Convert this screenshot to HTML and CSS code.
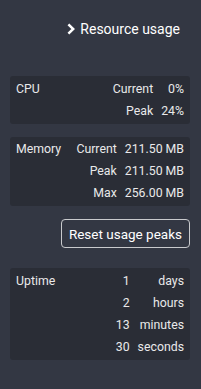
FILE: index.html
```html
<!DOCTYPE html>
<html lang="en">
  <head>
    <meta charset="UTF-8" />
    <meta name="viewport" content="width=device-width, initial-scale=1.0" />
    <title>Resource usage</title>
    <link rel="stylesheet" href="styles.css">
  </head>
  <body>
    <main class="panel">
      <header class="panel-header">
        <h2>
          <svg class="chevron" width="10" height="12" viewBox="0 0 10 12">
            <path d="M2.4 1.3 L7.2 6 L2.4 10.7" fill="none" stroke="#fff" stroke-width="2.5" />
          </svg>
          Resource usage
        </h2>
      </header>

      <section class="usage-card">
        <span class="label">CPU</span>
        <span class="key">Current</span>
        <span class="value">0%</span>
        <span></span>
        <span class="key">Peak</span>
        <span class="value">24%</span>
      </section>

      <section class="usage-card">
        <span class="label">Memory</span>
        <span class="key">Current</span>
        <span class="value">211.50 MB</span>
        <span></span>
        <span class="key">Peak</span>
        <span class="value">211.50 MB</span>
        <span></span>
        <span class="key">Max</span>
        <span class="value">256.00 MB</span>
      </section>

      <div class="actions">
        <button type="button" id="reset-peaks">Reset usage peaks</button>
      </div>

      <section class="usage-card uptime">
        <span class="label">Uptime</span>
        <span class="key">1</span>
        <span class="value">days</span>
        <span></span>
        <span class="key">2</span>
        <span class="value">hours</span>
        <span></span>
        <span class="key">13</span>
        <span class="value">minutes</span>
        <span></span>
        <span class="key">30</span>
        <span class="value">seconds</span>
      </section>
    </main>
  </body>
</html>
```

FILE: styles.css
```css
* {
  margin: 0;
  padding: 0;
  box-sizing: border-box;
}

body {
  font-family: Roboto, "Liberation Sans", sans-serif;
  background-color: #333743;
  color: #e9e9ea;
}

.panel {
  width: 180px;
  margin-left: 10px;
}

.panel-header {
  padding: 19px 10px 0 0;
  margin-bottom: 37px;
  text-align: right;
}

.panel-header h2 {
  font-size: 14px;
  font-weight: 400;
  line-height: 20px;
  color: #fff;
}

.chevron {
  vertical-align: -1px;
  margin-right: 1px;
}

.usage-card {
  display: grid;
  grid-template-columns: 1fr auto auto;
  column-gap: 8px;
  padding: 1.5px 6px 2px;
  margin-bottom: 13px;
  background-color: #2a2d36;
  border-radius: 3px;
  font-size: 12.3px;
  line-height: 22px;
}

.usage-card .key,
.usage-card .value {
  text-align: right;
}

.actions {
  display: flex;
  justify-content: flex-end;
  margin-bottom: 20px;
}

.actions button {
  height: 29px;
  padding: 0 7px;
  background: transparent;
  color: #fff;
  border: 1px solid #c9cacd;
  border-radius: 4px;
  font-family: inherit;
  font-size: 13.5px;
  cursor: pointer;
}
```
